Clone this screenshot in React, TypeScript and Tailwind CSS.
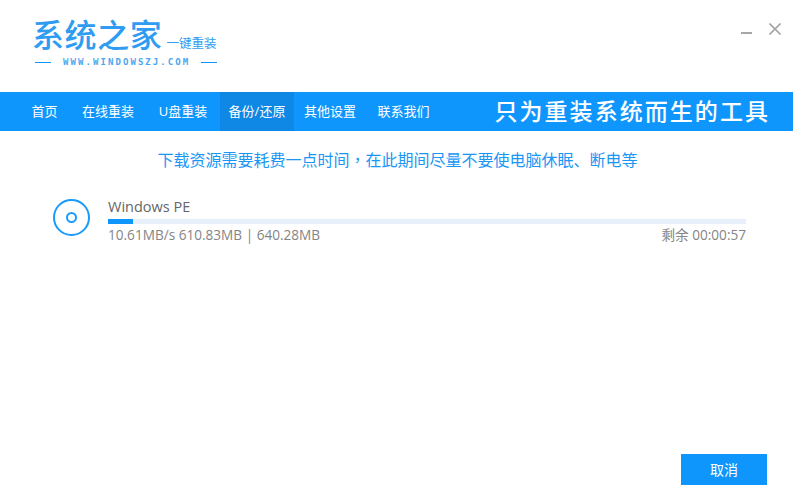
const navItems = [
  { label: "首页", width: "w-[51px]" },
  { label: "在线重装", width: "w-[76px]" },
  { label: "U盘重装", width: "w-[74px]" },
  { label: "备份/还原", width: "w-[74px]", active: true },
  { label: "其他设置", width: "w-[72px]" },
  { label: "联系我们", width: "w-[75px]" },
];

const App = () => {
  return (
    <div className="w-[793px] h-[497px] bg-white flex flex-col overflow-hidden font-['Open_Sans','Noto_Sans_CJK_SC',sans-serif]">
      {/* logo + window buttons */}
      <div className="h-[92px] flex justify-between">
        <div className="pl-[32px] pt-[15px] w-[230px]">
          <div className="flex items-end h-[39px]">
            <span className="text-[32px] leading-[39px] tracking-[0.6px] font-medium text-[#2f9cf2] whitespace-nowrap">系统之家</span>
            <span className="text-[12.5px] leading-[16px] mb-[2px] ml-[4px] text-[#2f9cf2] whitespace-nowrap">一键重装</span>
          </div>
          <div className="flex items-center mt-[2px] ml-[3px]">
            <div className="w-[16px] h-px bg-[#0f96fc]" />
            <span className="ml-[12px] w-[127px] text-[9px] leading-[12px] tracking-[2.07px] font-bold font-['DejaVu_Sans_Mono',monospace] text-[#4ba6f0] whitespace-nowrap">
              WWW.WINDOWSZJ.COM
            </span>
            <div className="ml-[11px] w-[16px] h-px bg-[#0f96fc]" />
          </div>
        </div>
        <div className="flex items-start pt-[23px] pr-[12px] gap-[17px]">
          <div className="w-[11px] h-[2px] bg-[#a6a6a6] mt-[9px]" />
          <svg width="12" height="12" viewBox="0 0 12 12" className="block">
            <path d="M0.5 0.5 L11.5 11.5 M11.5 0.5 L0.5 11.5" stroke="#a6a6a6" strokeWidth="1.6" fill="none" />
          </svg>
        </div>
      </div>

      {/* nav bar */}
      <div className="h-[39px] bg-[#0f96fc] flex items-stretch pl-[19px] pr-[23px] text-white">
        {navItems.map((item) => (
          <div
            key={item.label}
            className={`${item.width} flex items-center justify-center text-[13px] whitespace-nowrap ${item.active ? "bg-[#0f87e4]" : ""}`}
          >
            {item.label}
          </div>
        ))}
        <div className="ml-auto flex items-center text-[23px] font-medium tracking-[2.05px] whitespace-nowrap">
          只为重装系统而生的工具
        </div>
      </div>

      {/* message */}
      <div className="mt-[16px] h-[24px] pl-[2px] text-center text-[16px] leading-[24px] text-[#1a96f5]">
        下载资源需要耗费一点时间<span className="font-['Noto_Sans_CJK_TC',sans-serif]">，</span>在此期间尽量不要使电脑休眠、断电等
      </div>

      {/* download row */}
      <div className="mt-[26px] pl-[53px] pr-[47px] flex">
        <div className="mt-[2px] w-[37px] h-[37px] rounded-full border-2 border-[#1a9bfb] flex items-center justify-center shrink-0">
          <div className="w-[11px] h-[11px] rounded-full border-2 border-[#1a9bfb]" />
        </div>
        <div className="ml-[18px] flex-1">
          <div className="text-[14.5px] leading-[20px] text-[#666666]">Windows PE</div>
          <div className="h-[5px] bg-[#e6effa] mt-[2px]">
            <div className="h-full w-[25px] bg-[#0f96fc]" />
          </div>
          <div className="mt-[1px] flex justify-between text-[13.6px] leading-[20px] text-[#858585]">
            <span>10.61MB/s 610.83MB | 640.28MB</span>
            <span>剩余 00:00:57</span>
          </div>
        </div>
      </div>

      {/* cancel */}
      <div className="mt-auto pb-[12px] pr-[26px] flex justify-end">
        <button className="w-[86px] h-[31px] bg-[#0f96fc] text-white text-[14px]">取消</button>
      </div>
    </div>
  );
};

export default App;
